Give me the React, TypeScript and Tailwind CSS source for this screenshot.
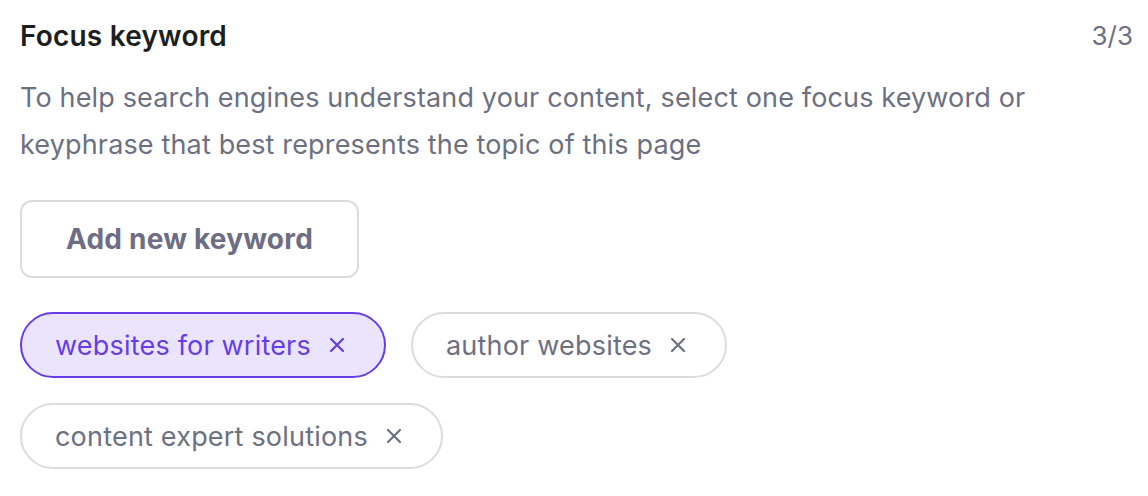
const keywords = [
  { label: "websites for writers", active: true },
  { label: "author websites", active: false },
  { label: "content expert solutions", active: false },
];

function CloseIcon() {
  return (
    <svg width="16" height="16" viewBox="0 0 16 16" fill="none" stroke="currentColor" strokeWidth="2.2" strokeLinecap="round">
      <path d="M2 2l12 12M14 2L2 14" />
    </svg>
  );
}

function KeywordChip({ label, active }: { label: string; active: boolean }) {
  return (
    <div
      className={
        active
          ? "flex h-[66px] items-center gap-[18px] rounded-full border-2 border-[#673de6] bg-[#ebe4ff] pl-[33px] pr-[39px] text-[#673de6]"
          : "flex h-[66px] items-center gap-[18px] rounded-full border-2 border-[#dadce0] bg-white pl-[33px] pr-[39px] text-[#6d7081]"
      }
    >
      <span className="text-[27px] leading-none tracking-[0.2px]">{label}</span>
      <CloseIcon />
    </div>
  );
}

export default function App() {
  return (
    <div
      className="min-h-[496px] w-[1148px] bg-white px-[20px] pt-[18px]"
      style={{ fontFamily: "Inter, 'Liberation Sans', sans-serif" }}
    >
      <div className="flex items-center justify-between">
        <h2 className="text-[28px] font-semibold leading-[36px] tracking-[0.2px] text-[#1d1e20]">
          Focus keyword
        </h2>
        <span className="-mr-[5px] text-[26px] leading-[36px] text-[#6d7081]">3/3</span>
      </div>

      <p className="mt-[20px] max-w-[1060px] text-[27px] leading-[47px] tracking-[0.15px] text-[#6d7081]">
        To help search engines understand your content, select one focus keyword or
        keyphrase that best represents the topic of this page
      </p>

      <button
        type="button"
        className="mt-[32px] flex h-[78px] w-[339px] items-center justify-center rounded-[12px] border-2 border-[#dadce0] text-[28px] font-bold tracking-[0.2px] text-[#6d6d84]"
      >
        Add new keyword
      </button>

      <div className="mt-[34px] flex flex-wrap gap-x-[25px] gap-y-[25px]">
        {keywords.map((k) => (
          <KeywordChip key={k.label} label={k.label} active={k.active} />
        ))}
      </div>
    </div>
  );
}
